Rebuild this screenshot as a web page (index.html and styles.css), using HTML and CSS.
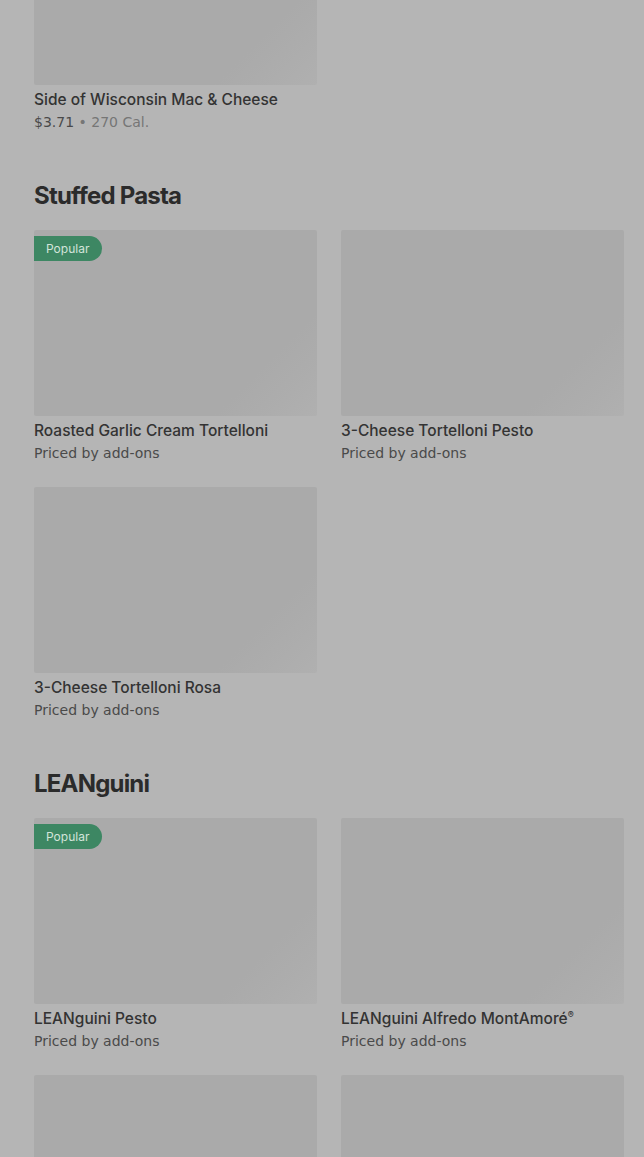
FILE: index.html
```html
<!DOCTYPE html>
<html lang="en">
<head>
  <meta charset="UTF-8" />
  <meta name="viewport" content="width=device-width, initial-scale=1.0"/>
  <title>Menu</title>
  <link rel="stylesheet" href="styles.css">
</head>
<body>

  <div class="menu">

    <!-- Sides (scrolled past) -->
    <section class="section first">
      <div class="grid">
        <div class="item">
          <div class="thumb"></div>
          <div class="name">Side of Wisconsin Mac &amp; Cheese</div>
          <div class="meta">$3.71 <span class="cal">• 270 Cal.</span></div>
        </div>
      </div>
    </section>

    <!-- Stuffed Pasta -->
    <section class="section">
      <h2>Stuffed Pasta</h2>
      <div class="grid">
        <div class="item">
          <div class="thumb"><span class="badge">Popular</span></div>
          <div class="name">Roasted Garlic Cream Tortelloni</div>
          <div class="meta">Priced by add-ons</div>
        </div>
        <div class="item">
          <div class="thumb"></div>
          <div class="name">3-Cheese Tortelloni Pesto</div>
          <div class="meta">Priced by add-ons</div>
        </div>
        <div class="item">
          <div class="thumb"></div>
          <div class="name">3-Cheese Tortelloni Rosa</div>
          <div class="meta">Priced by add-ons</div>
        </div>
      </div>
    </section>

    <!-- LEANguini -->
    <section class="section">
      <h2>LEANguini</h2>
      <div class="grid">
        <div class="item">
          <div class="thumb"><span class="badge">Popular</span></div>
          <div class="name">LEANguini Pesto</div>
          <div class="meta">Priced by add-ons</div>
        </div>
        <div class="item">
          <div class="thumb"></div>
          <div class="name">LEANguini Alfredo MontAmoré<sup>®</sup></div>
          <div class="meta">Priced by add-ons</div>
        </div>
        <div class="item">
          <div class="thumb"></div>
        </div>
        <div class="item">
          <div class="thumb"></div>
        </div>
      </div>
    </section>

  </div>

</body>
</html>
```

FILE: styles.css
```css
body {
  margin: 0;
  background: #b5b5b5;
  font-family: 'Inter', 'Noto Sans', sans-serif;
  color: #2e2e2e;
  overflow: hidden;
}

.menu {
  padding: 0 20px 0 34px;
  margin-top: -101px; /* page is scrolled */
}

.section {
  margin-top: 48px;
}
.section.first { margin-top: 0; }

h2 {
  margin: 0 0 18px;
  font-size: 24px;
  line-height: 32px;
  font-weight: 700;
  letter-spacing: -0.8px;
  color: #2b2b2b;
}

.grid {
  display: grid;
  grid-template-columns: repeat(2, 1fr);
  gap: 24px;
}

.thumb {
  position: relative;
  height: 186px;
  border-radius: 2px;
  background: linear-gradient(135deg, #aaaaaa 78%, #adadad 90%, #b0b0b0);
}

.badge {
  position: absolute;
  top: 6px;
  left: 0;
  height: 25px;
  padding: 0 13px 0 12px;
  border-radius: 0 13px 13px 0;
  background: #3d8763;
  color: #d3e4da;
  font-size: 12px;
  line-height: 25px;
}

.name {
  margin-top: 5px;
  font-size: 15.5px;
  line-height: 20px;
  font-weight: 500;
  color: #333;
}

.name sup {
  font-size: 9px;
  line-height: 0;
  vertical-align: 6px;
}

.meta {
  margin-top: 2px;
  font-family: 'DejaVu Sans', sans-serif;
  font-size: 14px;
  line-height: 20px;
  color: #4a4a4a;
}

.cal { color: #767676; }
```
